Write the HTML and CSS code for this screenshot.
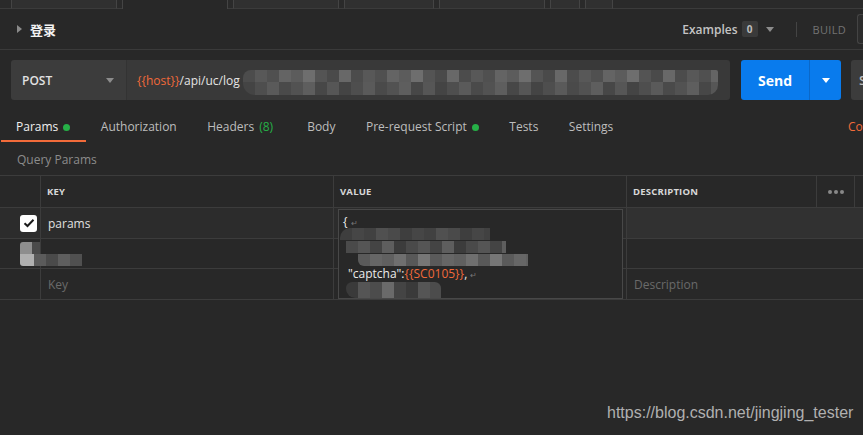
FILE: index.html
```html
<!DOCTYPE html>
<html>
<head>
<meta charset="utf-8">
<link rel="stylesheet" href="styles.css">
</head>
<body>
<div class="app">
  <div class="tabstrip">
    <span class="ts-pad"></span>
    <span class="ts-tab"></span>
    <span class="ts-gap"></span>
    <span class="ts-tab active"></span>
    <span class="ts-gap"></span>
    <span class="ts-tab"></span>
    <span class="ts-gap"></span>
    <span class="ts-tab w2"></span>
    <span class="ts-gap"></span>
    <span class="ts-tab w3"></span>
    <span class="ts-gap"></span>
    <span class="ts-tab w4"></span>
    <span class="ts-gap"></span>
    <span class="ts-tab w5"></span>
    <span class="ts-rest"></span>
  </div>

  <div class="header">
    <div class="title">
      <span class="tri"></span>
      <span class="name">登录</span>
    </div>
    <div class="hright">
      <span class="examples">Examples</span>
      <span class="badge">0</span>
      <span class="caret gray"></span>
      <span class="vsep"></span>
      <span class="build">BUILD</span>
      <span class="hbox"></span>
    </div>
  </div>

  <div class="urlrow">
    <div class="method">
      <span>POST</span>
      <span class="caret gray"></span>
    </div>
    <div class="url">
      <span class="var">{{host}}</span><span class="path">/api/uc/log</span>
      <span class="blur-url"></span>
    </div>
    <div class="send">
      <span class="send-label">Send</span>
      <span class="send-drop"><span class="caret white"></span></span>
    </div>
    <div class="save"><span>S</span></div>
  </div>

  <div class="reqtabs">
    <div class="rt active">Params<span class="dot"></span></div>
    <div class="rt">Authorization</div>
    <div class="rt wide">Headers<span class="green">(8)</span></div>
    <div class="rt">Body</div>
    <div class="rt">Pre-request Script<span class="dot"></span></div>
    <div class="rt">Tests</div>
    <div class="rt">Settings</div>
    <div class="rt-right">Cookies</div>
  </div>

  <div class="qp">Query Params</div>

  <div class="tablewrap">
    <div class="ptable">
      <div class="c hd"></div>
      <div class="c hd">KEY</div>
      <div class="c hd">VALUE</div>
      <div class="c hd">DESCRIPTION</div>
      <div class="c hd more"><span></span><span></span><span></span></div>
      <div class="c hd last"></div>

      <div class="c r1 chk"><span class="checkbox"><svg width="12" height="10" viewBox="0 0 12 10"><path d="M1.5 5.2 L4.5 8 L10.5 1.8" fill="none" stroke="#1a1a1a" stroke-width="2"/></svg></span></div>
      <div class="c r1">params</div>
      <div class="c r1"></div>
      <div class="c r1 desc span3"></div>

      <div class="c chk"><span class="blur-chk"></span></div>
      <div class="c"></div>
      <div class="c"></div>
      <div class="c span3"></div>

      <div class="c"></div>
      <div class="c ph">Key</div>
      <div class="c"></div>
      <div class="c ph span3">Description</div>
    </div>

    <div class="editor">
      <div class="ln">{ <span class="ret">↵</span></div>
      <div class="ln"><span class="blur-a"></span></div>
      <div class="ln"><span class="blur-b"></span></div>
      <div class="ln"><span class="blur-c"></span></div>
      <div class="ln ind">"captcha":<span class="var">{{SC0105}}</span>, <span class="ret">↵</span></div>
      <div class="ln"><span class="blur-e"></span></div>
    </div>
  </div>

  <div class="watermark">https://blog.csdn.net/jingjing_tester</div>
</div>
</body>
</html>
```

FILE: styles.css
```css
* { box-sizing: border-box; }
html, body { margin: 0; padding: 0; }
body {
  background: #282828;
  font-family: "Open Sans", "Noto Sans CJK SC", sans-serif;
  font-size: 12px;
  color: #cfcfcf;
  width: 863px;
  height: 435px;
  overflow: hidden;
}
.app { position: relative; width: 863px; height: 435px; }

/* top tab strip */
.tabstrip { display: flex; height: 9px; }
.tabstrip span { height: 9px; }
.ts-pad { width: 11px; background: #2a2a2a; border-bottom: 1px solid #3b3b3b; }
.ts-tab { width: 106px; background: #303030; border-left: 1px solid #444; border-right: 1px solid #444; border-bottom: 1px solid #3b3b3b; }
.ts-tab.active { background: #282828; border-bottom: none; }
.ts-tab.w2 { width: 90px; }
.ts-tab.w3 { width: 106px; }
.ts-tab.w4 { width: 30px; }
.ts-tab.w5 { width: 28px; }
.ts-gap { width: 5px; background: #2a2a2a; border-bottom: 1px solid #3b3b3b; }
.ts-rest { flex: 1; background: #2a2a2a; border-bottom: 1px solid #3b3b3b; }

/* header */
.header {
  height: 41px;
  display: flex;
  align-items: center;
  justify-content: space-between;
  border-bottom: 1px solid #3a3a3a;
}
.title { display: flex; align-items: center; padding-left: 17px; }
.tri {
  width: 0; height: 0;
  border-top: 4px solid transparent;
  border-bottom: 4px solid transparent;
  border-left: 5px solid #8a8a8a;
}
.name { margin-left: 8px; font-weight: 700; font-size: 13px; color: #f2f2f2; }
.hright { display: flex; align-items: center; height: 100%; }
.examples { color: #c4c4c4; font-size: 12px; font-weight: 600; }
.badge {
  margin-left: 4px;
  width: 16px; height: 16px;
  background: #3a3a3a;
  border-radius: 2px;
  color: #bdbdbd;
  font-size: 10px;
  font-weight: 700;
  display: flex; align-items: center; justify-content: center;
}
.caret {
  width: 0; height: 0;
  border-left: 4px solid transparent;
  border-right: 4px solid transparent;
  border-top: 5px solid #9a9a9a;
}
.caret.gray { border-top-color: #8c8c8c; }
.caret.white { border-top-color: #ffffff; }
.hright .caret { margin-left: 8px; }
.vsep { width: 1px; height: 15px; background: #444; margin-left: 22px; }
.build { margin-left: 16px; color: #737373; font-size: 11px; letter-spacing: 0.3px; }
.hbox { width: 6px; height: 30px; margin-left: 11px; border: 1px solid #444; border-right: none; border-radius: 3px 0 0 3px; background: #2c2c2c; }

/* url row */
.urlrow { display: flex; height: 40px; margin-top: 10px; padding-left: 11px; }
.method {
  width: 116px;
  background: #3c3c3c;
  border-radius: 3px 0 0 3px;
  border-right: 1px solid #333;
  display: flex; align-items: center; justify-content: space-between;
  padding: 0 12px 0 11px;
  color: #e2e2e2;
  font-weight: 600;
}
.url {
  width: 603px;
  background: #393939;
  border-radius: 0 3px 3px 0;
  display: flex; align-items: center;
  padding-left: 10px;
  position: relative;
  color: #e2e2e2;
}
.var { color: #f0693a; }
.path { color: #e4e4e4; }
.blur-url {
  position: absolute;
  left: 116px; top: 10px;
  width: 475px; height: 25px;
  border-radius: 8px 2px 10px 12px;
  background:
    repeating-linear-gradient(90deg, #4c4c4c 0 12px, #585858 12px 24px, #505050 24px 36px, #646464 36px 48px, #5c5c5c 48px 60px, #6e6e6e 60px 72px, #545454 72px 84px, #4a4a4a 84px 96px, #686868 96px 108px) top / 100% 12px no-repeat,
    repeating-linear-gradient(90deg, #444 0 12px, #4e4e4e 12px 24px, #5a5a5a 24px 36px, #4a4a4a 36px 48px, #525252 48px 60px, #5e5e5e 60px 72px, #474747 72px 84px, #565656 84px 96px) bottom / 100% 13px no-repeat;
}
.send {
  width: 100px;
  margin-left: 11px;
  background: #097bed;
  border-radius: 3px;
  display: flex;
}
.send-label {
  width: 69px;
  display: flex; align-items: center; justify-content: center;
  color: #fff; font-weight: 700; font-size: 14px;
  border-right: 1px solid #0a68c9;
}
.send-drop { flex: 1; display: flex; align-items: center; justify-content: center; }
.save {
  margin-left: 10px;
  flex: 1;
  background: #3c3c3c;
  border-radius: 3px 0 0 3px;
  display: flex; align-items: center;
  padding-left: 8px;
  color: #bbb; font-weight: 600; font-size: 13px;
  overflow: hidden;
}

/* request tabs */
.reqtabs { display: flex; margin-top: 14px; padding-left: 1px; height: 28px; position: relative; }
.rt {
  padding: 5px 15.5px 0 15px;
  line-height: 16px;
  height: 28px;
  color: #bdbdbd;
  border-bottom: 2px solid transparent;
  display: flex; align-items: flex-start;
  white-space: nowrap;
}
.rt.wide { padding-right: 19px; }
.rt.active { color: #f0f0f0; border-bottom-color: #f26b3a; }
.dot { display: inline-block; width: 7px; height: 7px; border-radius: 50%; background: #26b047; margin: 5px 0 0 5px; }
.green { color: #26b047; margin-left: 5px; }
.rt-right { position: absolute; left: 848px; top: 5px; line-height: 16px; color: #f26b3a; white-space: nowrap; }

.qp { margin-top: 10px; padding-left: 17px; line-height: 16px; color: #8c8c8c; }

/* table */
.tablewrap { position: relative; margin-top: 7px; }
.ptable {
  display: grid;
  grid-template-columns: 41px 293px 293px 190px 38px 1fr;
  grid-template-rows: 32px 31px 30px 31px;
  border-top: 1px solid #3c3c3c;
}
.c {
  border-right: 1px solid #3c3c3c;
  border-bottom: 1px solid #3c3c3c;
  display: flex; align-items: center;
  padding-left: 7px;
  color: #e0e0e0;
}
.c.last { border-right: none; }
.c.span3 { grid-column: span 3; border-right: none; }
.hd { font-size: 9.5px; font-weight: 700; color: #d8d8d8; padding-left: 6px; letter-spacing: 0.2px; }
.more { justify-content: center; gap: 2px; padding-left: 0; }
.more span { width: 4px; height: 4px; border-radius: 50%; background: #888; }
.r1 { background: #2c2c2c; }
.r1.desc { background: #313131; }
.chk { padding-left: 20px; }
.checkbox {
  width: 17px; height: 17px;
  background: #ffffff;
  border-radius: 3px;
  display: flex; align-items: center; justify-content: center;
}
.ph { color: #6a6a6a; }
.blur-chk {
  flex-shrink: 0;
  width: 62px; height: 24px; margin-top: 0;
  border-radius: 3px 0 0 3px;
  background:
    linear-gradient(90deg, #8e8e8e 0 12px, #4a4a4a 12px 20px, transparent 20px) top left / 62px 12px no-repeat,
    linear-gradient(90deg, #b0b0b0 0 14px, #5b5b5b 14px 26px, #4a4a4a 26px 38px, #5e5e5e 38px 50px, #505050 50px 62px) bottom left / 62px 12px no-repeat;
}

/* value editor popup */
.editor {
  position: absolute;
  left: 338px; top: 34px;
  width: 285px; height: 90px;
  background: #282828;
  border: 1px solid #484848;
  padding: 5px 0 0 4px;
  overflow: hidden;
}
.ln { height: 13px; line-height: 13px; color: #ebebeb; white-space: nowrap; position: relative; }
.ln.ind { padding-left: 5px; }
.ret { color: #777; font-size: 8px; }
.ln span[class^="blur"] { position: absolute; top: 0; height: 12px; }
.blur-a {
  left: -3px; width: 150px;
  border-radius: 10px 0 0 0;
  background: repeating-linear-gradient(90deg, #3e3e3e 0 12px, #464646 12px 24px, #414141 24px 36px, #505050 36px 48px, #4a4a4a 48px 60px);
}
.blur-b {
  left: 3px; width: 160px;
  background: repeating-linear-gradient(90deg, #4a4a4a 0 12px, #555 12px 24px, #444 24px 36px, #5e5e5e 36px 48px, #3c3c3c 48px 60px);
}
.blur-c {
  left: 15px; width: 170px;
  border-radius: 0 0 0 6px;
  background: repeating-linear-gradient(90deg, #5a5a5a 0 12px, #666 12px 24px, #606060 24px 36px, #6f6f6f 36px 48px, #585858 48px 60px, #767676 60px 72px);
}
.blur-e {
  left: 3px; top: 2px !important; height: 16px !important; width: 95px;
  border-radius: 8px 8px 0 12px;
  background: repeating-linear-gradient(90deg, #3a3a3a 0 12px, #555 12px 24px, #4c4c4c 24px 36px, #6a6a6a 36px 48px, #444 48px 60px);
}

.watermark {
  position: absolute;
  left: 607px; top: 404px;
  font-family: "Liberation Sans", Arial, sans-serif;
  font-size: 16px;
  color: #b0b0b0;
  white-space: nowrap;
}
```
